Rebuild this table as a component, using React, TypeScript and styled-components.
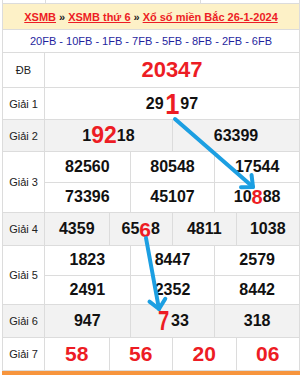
import React from 'react';
import styled, { createGlobalStyle } from 'styled-components';

const GlobalStyle = createGlobalStyle`
  html, body {
    margin: 0;
    padding: 0;
    background: #fff;
  }
  body {
    font-family: "Liberation Sans", Arial, sans-serif;
  }
`;

const BORDER = '#dcdcdc';
const RED = '#ed1c24';

const Page = styled.div`
  position: relative;
  width: 302px;
  height: 375px;
  overflow: hidden;
`;

const Table = styled.div`
  margin-left: 2px;
  width: 298px;
  box-sizing: border-box;
  border-left: 1px solid ${BORDER};
  border-right: 1px solid ${BORDER};
`;

const Row = styled.div<{ $h: number; $gray?: boolean }>`
  display: flex;
  height: ${(p) => p.$h}px;
  box-sizing: border-box;
  border-bottom: 1px solid ${BORDER};
  background: ${(p) => (p.$gray ? '#f2f2f2' : '#fff')};
`;

const Stub = styled.div`
  display: grid;
  grid-template-columns: 42px 155px 1fr;
  height: 4px;
  box-sizing: border-box;
  border-bottom: 1px solid ${BORDER};

  & > div + div {
    border-left: 1px solid ${BORDER};
  }
`;

const Header = styled.div`
  display: flex;
  align-items: center;
  justify-content: center;
  height: 26px;
  box-sizing: border-box;
  border-bottom: 1px solid ${BORDER};
  background: #fdf1c7;
  font-size: 11px;
  font-weight: bold;
  color: #222;
  gap: 3px;
`;

const Crumb = styled.a`
  color: ${RED};
  text-decoration: underline;
  cursor: pointer;
`;

const Codes = styled.div`
  display: flex;
  align-items: center;
  justify-content: center;
  height: 23px;
  box-sizing: border-box;
  border-bottom: 1px solid ${BORDER};
  font-size: 11px;
  color: #1f1f9e;
`;

const Label = styled.div`
  width: 42px;
  flex-shrink: 0;
  box-sizing: border-box;
  border-right: 1px solid ${BORDER};
  display: flex;
  align-items: center;
  justify-content: center;
  font-size: 11px;
  color: #222;
`;

const Body = styled.div`
  flex: 1;
  display: flex;
  flex-direction: column;
`;

const SubRow = styled.div<{ $cols: number }>`
  flex: 1;
  display: grid;
  grid-template-columns: repeat(${(p) => p.$cols}, 1fr);

  & + & {
    border-top: 1px solid ${BORDER};
  }
`;

const Cell = styled.div<{ $size?: number; $red?: boolean }>`
  display: flex;
  align-items: center;
  justify-content: center;
  font-size: ${(p) => p.$size ?? 16}px;
  font-weight: bold;
  color: ${(p) => (p.$red ? RED : '#111')};
  white-space: nowrap;

  & + & {
    border-left: 1px solid ${BORDER};
  }
`;

const Hit = styled.span<{ $size: number; $sx?: number }>`
  display: inline-block;
  color: ${RED};
  font-size: ${(p) => p.$size}px;
  line-height: 1;
  transform: scaleX(${(p) => p.$sx ?? 1});
`;

const BottomBar = styled.div`
  margin-left: 2px;
  width: 298px;
  height: 4px;
  background: #f7953d;
`;

const Arrows = styled.svg`
  position: absolute;
  left: 0;
  top: 0;
  pointer-events: none;
`;

type Num = string | React.ReactNode;

const prizes: { label: string; h: number; gray?: boolean; cols: number; rows: Num[][]; size?: number; red?: boolean }[] = [
  { label: 'ĐB', h: 35, cols: 1, rows: [['20347']], size: 22, red: true },
  {
    label: 'Giải 1',
    h: 32,
    cols: 1,
    rows: [[<>29<Hit $size={30} $sx={0.85}>1</Hit>97</>]],
  },
  {
    label: 'Giải 2',
    h: 32,
    gray: true,
    cols: 2,
    rows: [[<>1<Hit $size={23}>92</Hit>18</>, '63399']],
  },
  {
    label: 'Giải 3',
    h: 61,
    cols: 3,
    rows: [
      ['82560', '80548', '17544'],
      ['73396', '45107', <>10<Hit $size={20}>8</Hit>88</>],
    ],
  },
  {
    label: 'Giải 4',
    h: 33,
    gray: true,
    cols: 4,
    rows: [['4359', <>65<Hit $size={21}>6</Hit>8</>, '4811', '1038']],
  },
  {
    label: 'Giải 5',
    h: 59,
    cols: 3,
    rows: [
      ['1823', '8447', '2579'],
      ['2491', '2352', '8442'],
    ],
  },
  {
    label: 'Giải 6',
    h: 33,
    gray: true,
    cols: 3,
    rows: [['947', <><Hit $size={27} $sx={0.75}>7</Hit>33</>, '318']],
  },
  { label: 'Giải 7', h: 33, cols: 4, rows: [['58', '56', '20', '06']], size: 21, red: true },
];

function Arrow({ x1, y1, x2, y2 }: { x1: number; y1: number; x2: number; y2: number }) {
  const a = Math.atan2(y2 - y1, x2 - x1) + Math.PI;
  const len = 12;
  const spread = (42 * Math.PI) / 180;
  const b1x = x2 + len * Math.cos(a - spread);
  const b1y = y2 + len * Math.sin(a - spread);
  const b2x = x2 + len * Math.cos(a + spread);
  const b2y = y2 + len * Math.sin(a + spread);
  return (
    <g stroke="#1c9fe2" strokeWidth={4} strokeLinecap="round" strokeLinejoin="round" fill="none">
      <line x1={x1} y1={y1} x2={x2} y2={y2} />
      <polyline points={`${b1x},${b1y} ${x2},${y2} ${b2x},${b2y}`} />
    </g>
  );
}

export default function App() {
  return (
    <Page>
      <GlobalStyle />
      <Table>
        <Stub>
          <div />
          <div />
          <div />
        </Stub>
        <Header>
          <Crumb>XSMB</Crumb>
          <span>»</span>
          <Crumb>XSMB thứ 6</Crumb>
          <span>»</span>
          <Crumb>Xổ số miền Bắc 26-1-2024</Crumb>
        </Header>
        <Codes>20FB - 10FB - 1FB - 7FB - 5FB - 8FB - 2FB - 6FB</Codes>
        {prizes.map((p) => (
          <Row key={p.label} $h={p.h} $gray={p.gray}>
            <Label>{p.label}</Label>
            <Body>
              {p.rows.map((r, i) => (
                <SubRow key={i} $cols={p.cols}>
                  {r.map((n, j) => (
                    <Cell key={j} $size={p.size} $red={p.red}>
                      {n}
                    </Cell>
                  ))}
                </SubRow>
              ))}
            </Body>
          </Row>
        ))}
      </Table>
      <BottomBar />
      <Arrows width={302} height={375}>
        <Arrow x1={175} y1={119} x2={253} y2={187} />
        <Arrow x1={146} y1={238} x2={159} y2={309} />
      </Arrows>
    </Page>
  );
}
